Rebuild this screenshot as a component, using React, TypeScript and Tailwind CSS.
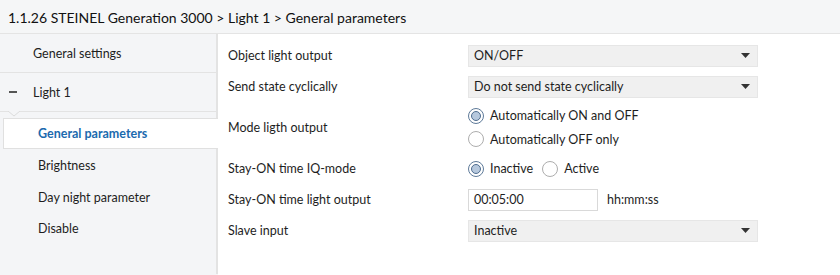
import React from 'react';

const font = { fontFamily: '"Segoe UI", Lato, "Noto Sans", sans-serif' };

function Radio({ checked }: { checked?: boolean }) {
  return (
    <svg width="16" height="16" viewBox="0 0 16 16" className="shrink-0">
      <circle cx="8" cy="8" r="7.5" fill="#fff" stroke={checked ? '#5e7a99' : '#adadad'} strokeWidth="1" />
      {checked && <circle cx="8" cy="8" r="4.5" fill="#b6c8dd" stroke="#4f6d8f" strokeWidth="1" />}
    </svg>
  );
}

function Select({ value }: { value: string }) {
  return (
    <div className="flex h-[22px] w-[290px] items-center justify-between border border-[#e6e6e6] bg-[#f0f0f0] pl-[5px] pr-[7px]">
      <span className="pt-[1px]">{value}</span>
      <svg width="9" height="5" viewBox="0 0 9 5">
        <path d="M0 0h9L4.5 5z" fill="#333" />
      </svg>
    </div>
  );
}

function Row({ label, children, h = 'h-[31px]' }: { label: string; children: React.ReactNode; h?: string }) {
  return (
    <div className={`flex items-center ${h}`}>
      <div className="w-[240px] shrink-0 pt-[2px]">{label}</div>
      {children}
    </div>
  );
}

export default function App() {
  const subItems = ['Brightness', 'Day night parameter', 'Disable'];

  return (
    <div className="h-[275px] w-[840px] overflow-hidden bg-white text-[12.5px] text-[#1e1e1e]" style={font}>
      <div className="flex h-[34px] items-center border-b border-[#e4e4e4] bg-[#f5f6f7] pl-2 pt-[1px] text-[14px] text-[#111]">
        1.1.26 STEINEL Generation 3000 &gt; Light 1 &gt; General parameters
      </div>

      <div className="flex h-[241px]">
        <div className="w-[218px] shrink-0 bg-[#f4f5f7]">
          <div className="flex h-[39px] items-center border-b border-r-2 border-[#e3e3e3] pl-[33px] pt-[2px]">General settings</div>
          <div className="relative flex h-[39px] items-center border-b border-r-2 border-[#e3e3e3]">
            <span className="ml-[9px] h-[2px] w-[8px] bg-[#555]" />
            <span className="ml-[16px] pt-[2px]">Light 1</span>
            <svg className="absolute left-[8px] top-[38px]" width="12" height="6" viewBox="0 0 12 6">
              <path d="M0 0L6 5L12 0" fill="#f4f5f7" stroke="#dcdcdc" strokeWidth="1" />
            </svg>
          </div>
          <div className="h-[6px] border-r-2 border-[#e3e3e3]" />
          <div className="ml-[3px] flex h-[31px] items-center border border-r-0 border-[#e0e0e0] bg-white pl-[34px] pt-[2px] font-bold text-[#1b6aae]">
            General parameters
          </div>
          <div className="h-[125px] border-r-2 border-[#e3e3e3] pt-[2px]">
            {subItems.map((s) => (
              <div key={s} className="flex h-[31.5px] items-center pl-[38px]">{s}</div>
            ))}
          </div>
        </div>

        <div className="flex flex-1 flex-col pl-[10px] pt-[6px]">
          <Row label="Object light output"><Select value="ON/OFF" /></Row>
          <Row label="Send state cyclically"><Select value="Do not send state cyclically" /></Row>
          <Row label="Mode ligth output" h="h-[51px]">
            <div className="flex flex-col gap-[4px]">
              <div className="flex items-center gap-[6px]"><Radio checked /><span className="pt-[1px]">Automatically ON and OFF</span></div>
              <div className="flex items-center gap-[6px]"><Radio /><span className="pt-[1px]">Automatically OFF only</span></div>
            </div>
          </Row>
          <Row label="Stay-ON time IQ-mode">
            <div className="flex items-center gap-[6px]"><Radio checked /><span className="pt-[1px]">Inactive</span></div>
            <div className="ml-[9px] flex items-center gap-[6px]"><Radio /><span className="pt-[1px]">Active</span></div>
          </Row>
          <Row label="Stay-ON time light output">
            <div className="flex h-[22px] w-[130px] items-center border border-[#d9d9d9] bg-white pl-[5px] pt-[1px]">00:05:00</div>
            <span className="ml-[9px] pt-[1px]">hh:mm:ss</span>
          </Row>
          <Row label="Slave input"><Select value="Inactive" /></Row>
        </div>
      </div>
    </div>
  );
}
